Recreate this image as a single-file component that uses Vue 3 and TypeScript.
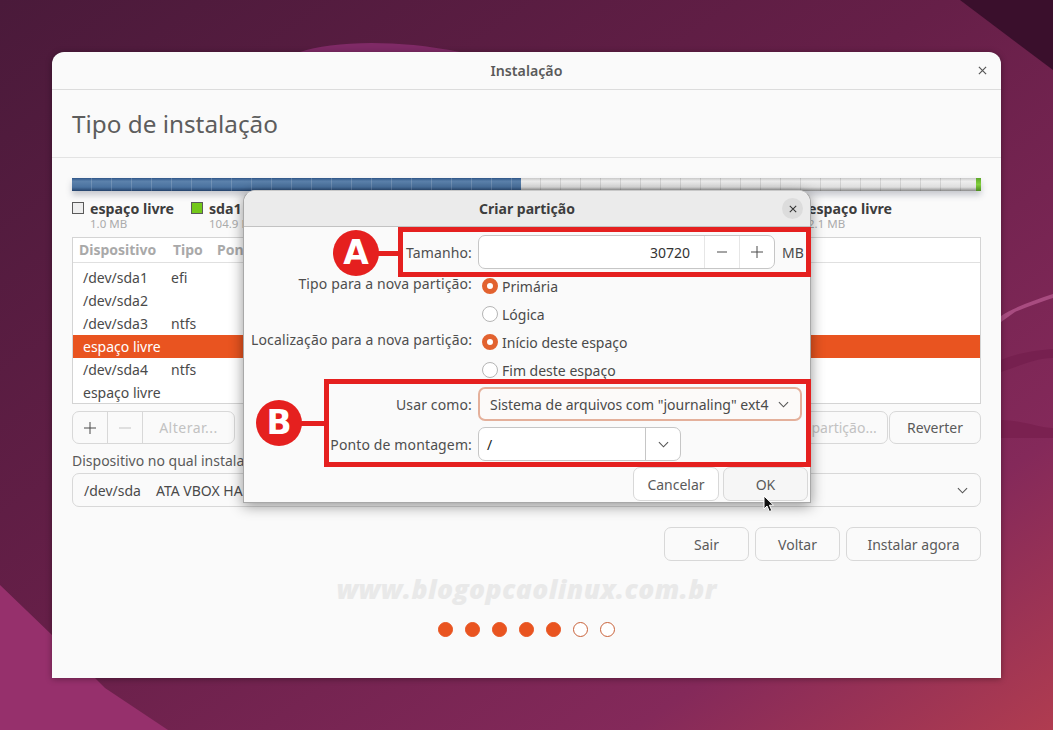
<script setup lang="ts">
interface PartRow {
  dev: string
  kind: string
  selected?: boolean
}

const rows: PartRow[] = [
  { dev: "/dev/sda1", kind: "efi" },
  { dev: "/dev/sda2", kind: "" },
  { dev: "/dev/sda3", kind: "ntfs" },
  { dev: "espaço livre", kind: "", selected: true },
  { dev: "/dev/sda4", kind: "ntfs" },
  { dev: "espaço livre", kind: "" },
]

const steps = [true, true, true, true, true, false, false]
</script>

<template>
  <div class="desktop">
    <svg class="wallpaper" viewBox="0 0 1053 730" preserveAspectRatio="none">
      <defs>
        <linearGradient id="base" x1="0" y1="0" x2="1" y2="1">
          <stop offset="0" stop-color="#4a1a3a" />
          <stop offset="0.45" stop-color="#661f48" />
          <stop offset="0.8" stop-color="#84295a" />
          <stop offset="1" stop-color="#b03c50" />
        </linearGradient>
      </defs>
      <rect width="1053" height="730" fill="url(#base)" />
      <path d="M0 585 L52 635 L105 688 L168 730 L0 730 Z" fill="#96306c" />
      <path d="M960 0 L1053 70 L1053 0 Z" fill="#3a0f2c" />
      <path d="M300 52 C330 42 390 38 460 52 Z" fill="#7f2a66" />
      <path d="M1001 316 C1012 308 1035 300 1053 294 L1053 298 C1040 302 1025 308 1015 312 L1001 322 Z" fill="#a84c80" />
      <path d="M1001 360 C1020 352 1040 350 1053 349 L1053 358 C1035 358 1020 366 1001 372 Z" fill="#76204f" />
      <path d="M1001 420 C1020 420 1040 428 1053 428 L1053 438 L1001 438 Z" fill="#7a2150" />
    </svg>

    <div class="window">
      <div class="titlebar">
        <span class="titlebar-text">Instalação</span>
        <svg class="close-x" viewBox="0 0 10 10"><path d="M1 1l8 8M9 1l-8 8" /></svg>
      </div>
      <div class="page-head">Tipo de instalação</div>

      <div class="content">
        <div class="bar">
          <div class="bar-used"></div>
          <div class="bar-free"></div>
          <div class="bar-end"></div>
        </div>

        <div class="legend">
          <div class="legend-item">
            <span class="swatch"></span>
            <div>
              <div class="legend-name">espaço livre</div>
              <div class="legend-size">1.0 MB</div>
            </div>
          </div>
          <div class="legend-item">
            <span class="swatch green"></span>
            <div>
              <div class="legend-name">sda1</div>
              <div class="legend-size">104.9 MB</div>
            </div>
          </div>
          <div class="legend-item last">
            <span class="swatch"></span>
            <div>
              <div class="legend-name">espaço livre</div>
              <div class="legend-size">2.1 MB</div>
            </div>
          </div>
        </div>

        <div class="table">
          <div class="table-head">
            <span class="th-dev">Dispositivo</span>
            <span class="th-type">Tipo</span>
            <span class="th-mount">Ponto de montagem</span>
          </div>
          <div class="table-body">
            <div v-for="(row, i) in rows" :key="i" class="row" :class="{ selected: row.selected }">
              <span class="td-dev">{{ row.dev }}</span>
              <span>{{ row.kind }}</span>
            </div>
          </div>
        </div>

        <div class="toolbar">
          <div class="group">
            <button class="seg icon-seg">
              <svg viewBox="0 0 12 12"><path d="M6 0v12M0 6h12" /></svg>
            </button>
            <button class="seg icon-seg off">
              <svg viewBox="0 0 12 12"><path d="M0 6h12" /></svg>
            </button>
            <button class="seg change">Alterar...</button>
          </div>
          <div class="toolbar-right">
            <button class="btn faded">Nova tabela de partição...</button>
            <button class="btn revert">Reverter</button>
          </div>
        </div>

        <div class="boot-label">Dispositivo no qual instalar o carregador de inicialização:</div>
        <div class="boot-select">
          <span class="boot-dev">/dev/sda</span>
          <span class="boot-name">ATA VBOX HARDDISK (64.4 GB)</span>
          <svg class="chev" viewBox="0 0 12 7"><path d="M1 1l5 5 5-5" /></svg>
        </div>

        <div class="actions">
          <button class="btn act-sair">Sair</button>
          <button class="btn act-voltar">Voltar</button>
          <button class="btn act-install">Instalar agora</button>
        </div>

        <div class="watermark">www.blogopcaolinux.com.br</div>

        <div class="dots">
          <span v-for="(on, i) in steps" :key="i" class="dot" :class="{ on }"></span>
        </div>
      </div>

      <div class="dialog">
        <div class="dialog-title">
          <span>Criar partição</span>
          <span class="dialog-close">
            <svg viewBox="0 0 10 10"><path d="M1 1l8 8M9 1l-8 8" /></svg>
          </span>
        </div>
        <div class="dialog-body">
          <div class="form">
            <label class="lbl">Tamanho:</label>
            <div class="size-line">
              <div class="spin">
                <span class="spin-value">30720</span>
                <span class="spin-btn"><svg viewBox="0 0 12 12"><path d="M1 6h10" /></svg></span>
                <span class="spin-btn"><svg viewBox="0 0 12 12"><path d="M6 0v12M0 6h12" /></svg></span>
              </div>
              <span class="unit">MB</span>
            </div>

            <label class="lbl top">Tipo para a nova partição:</label>
            <div class="radios">
              <div class="radio-line"><span class="radio on"></span>Primária</div>
              <div class="radio-line"><span class="radio"></span>Lógica</div>
            </div>

            <label class="lbl top">Localização para a nova partição:</label>
            <div class="radios">
              <div class="radio-line"><span class="radio on"></span>Início deste espaço</div>
              <div class="radio-line"><span class="radio"></span>Fim deste espaço</div>
            </div>

            <label class="lbl">Usar como:</label>
            <div class="select focused">
              <span>Sistema de arquivos com "journaling" ext4</span>
              <svg class="chev" viewBox="0 0 12 7"><path d="M1 1l5 5 5-5" /></svg>
            </div>

            <label class="lbl">Ponto de montagem:</label>
            <div class="mount">
              <span class="mount-value">/</span>
              <span class="mount-arrow">
                <svg class="chev" viewBox="0 0 12 7"><path d="M1 1l5 5 5-5" /></svg>
              </span>
            </div>
          </div>
          <div class="dialog-actions">
            <button class="btn d-cancel">Cancelar</button>
            <button class="btn d-ok">OK</button>
          </div>
        </div>
      </div>
    </div>

    <!-- anotacoes por cima da captura -->
    <div class="mark box-a"></div>
    <div class="mark box-b"></div>
    <div class="mark link-a"></div>
    <div class="mark link-b"></div>
    <div class="badge badge-a">A</div>
    <div class="badge badge-b">B</div>

    <svg class="cursor" viewBox="0 0 12 18">
      <path d="M1 1v13l3-3 2.400 5.500 2.400-1L6.400 10.200h4.100z" fill="#111" stroke="#fff" stroke-width="1" />
    </svg>
  </div>
</template>

<style scoped>
.desktop {
  position: relative;
  width: 1053px;
  height: 730px;
  padding: 52px;
  box-sizing: border-box;
  overflow: hidden;
  font-family: "Noto Sans", "DejaVu Sans", sans-serif;
  font-size: 14px;
  color: #3d3d3d;
}

.wallpaper {
  position: absolute;
  inset: 0;
  width: 100%;
  height: 100%;
}

.window {
  position: relative;
  height: 626px;
  background: #fafafa;
  border-radius: 12px 12px 0 0;
  box-shadow: 0 1px 6px rgba(0, 0, 0, 0.35);
  display: flex;
  flex-direction: column;
}

.titlebar {
  position: relative;
  height: 37px;
  flex: none;
  display: flex;
  align-items: center;
  justify-content: center;
  border-bottom: 1px solid #dcdcdc;
}

.titlebar-text {
  font-weight: 600;
  font-size: 14.200px;
  color: #5a5a5a;
}

.close-x {
  position: absolute;
  right: 14px;
  top: 14px;
  width: 9px;
  height: 9px;
  fill: none;
  stroke: #555;
  stroke-width: 1.300;
}

.page-head {
  height: 68px;
  flex: none;
  box-sizing: border-box;
  padding: 0 20px;
  display: flex;
  align-items: center;
  font-size: 24.300px;
  color: #5d5d5d;
  border-bottom: 1px solid #e3e3e3;
}

.content {
  flex: 1;
  display: flex;
  flex-direction: column;
  padding: 20px 20px 0;
}

.bar {
  display: flex;
  height: 13px;
  flex: none;
  box-shadow: 0 4px 6px rgba(60, 70, 90, 0.28);
}

.bar-used {
  width: 449px;
  background:
    repeating-linear-gradient(90deg, transparent 0 19px, rgba(255, 255, 255, 0.16) 19px 20px),
    linear-gradient(#2f5688, #5c82ac 25%, #4a729f 70%, #25436c);
}

.bar-free {
  flex: 1;
  background:
    repeating-linear-gradient(90deg, transparent 0 19px, rgba(0, 0, 0, 0.1) 19px 20px),
    linear-gradient(#c9c9c9, #eeeeee 25%, #dedede 70%, #8b8b8b);
}

.bar-end {
  width: 5px;
  background: linear-gradient(#5ea82a, #82d03c 50%, #4e8d22);
}

.legend {
  display: flex;
  margin-top: 9px;
  height: 37px;
  flex: none;
}

.legend-item {
  display: flex;
  gap: 6px;
  width: 119px;
}

.legend-item.last {
  margin-left: auto;
  width: 104px;
  margin-right: 87px;
}

.swatch {
  width: 10px;
  height: 10px;
  margin-top: 2px;
  border: 1px solid #5a5a5a;
  background: #eeeeee;
  flex: none;
}

.swatch.green {
  background: #73c81a;
}

.legend-name {
  font-weight: 700;
  font-size: 14.200px;
  line-height: 17px;
  color: #3d3d3d;
}

.legend-size {
  font-size: 11.500px;
  line-height: 14px;
  color: #ababab;
}

.table {
  height: 167px;
  flex: none;
  box-sizing: border-box;
  border: 1px solid #d4d4d4;
  background: #fff;
}

.table-head {
  height: 25px;
  display: flex;
  align-items: center;
  padding-left: 6px;
  padding-bottom: 2px;
  border-bottom: 1px solid #e0e0e0;
  font-weight: 700;
  font-size: 14px;
  color: #a9a9a9;
  box-sizing: border-box;
}

.th-dev {
  width: 94px;
}

.th-type {
  width: 44px;
}

.th-mount {
  width: 26px;
  overflow: hidden;
  white-space: nowrap;
}

.table-body {
  padding-top: 3px;
}

.row {
  height: 23px;
  display: flex;
  align-items: center;
  padding-left: 10px;
  color: #4a4a4a;
}

.row.selected {
  background: #e95420;
  color: #fff;
}

.td-dev {
  width: 88px;
}

.toolbar {
  display: flex;
  justify-content: space-between;
  margin-top: 7px;
  flex: none;
}

.group {
  display: flex;
  height: 33px;
  box-sizing: border-box;
  border: 1px solid #d8d8d8;
  border-radius: 7px;
  background: #fafafa;
}

.seg {
  border: 0;
  border-right: 1px solid #d8d8d8;
  background: none;
  padding: 0;
  font: inherit;
}

.seg:last-child {
  border-right: 0;
}

.icon-seg {
  width: 35px;
  display: flex;
  align-items: center;
  justify-content: center;
}

.icon-seg svg {
  width: 12px;
  height: 12px;
  fill: none;
  stroke: #4a4a4a;
  stroke-width: 1;
}

.icon-seg.off svg {
  stroke: #c4c4c4;
}

.change {
  width: 91px;
  color: #c2c2c2;
  letter-spacing: 0.5px;
}

.toolbar-right {
  display: flex;
  gap: 1px;
}

.btn {
  height: 34px;
  box-sizing: border-box;
  border: 1px solid #d8d8d8;
  border-radius: 7px;
  background: #fafafa;
  font: inherit;
  color: #5a5a5a;
  padding: 0;
}

.toolbar-right .btn {
  height: 33px;
}

.faded {
  width: 190px;
  color: #c2c2c2;
}

.revert {
  width: 92px;
}

.boot-label {
  margin-top: 6px;
  height: 23px;
  line-height: 21px;
  color: #5a5a5a;
  flex: none;
}

.boot-select {
  height: 34px;
  flex: none;
  box-sizing: border-box;
  border: 1px solid #d8d8d8;
  border-radius: 7px;
  display: flex;
  align-items: center;
  padding: 0 12px 0 11px;
  color: #4a4a4a;
  background: #fafafa;
}

.boot-dev {
  width: 72px;
}

.boot-name {
  flex: 1;
  white-space: nowrap;
}

.chev {
  width: 11px;
  height: 7px;
  fill: none;
  stroke: #555;
  stroke-width: 1.200;
  flex: none;
}

.actions {
  display: flex;
  justify-content: flex-end;
  gap: 6px;
  margin-top: 20px;
  flex: none;
}

.act-sair {
  width: 85px;
}

.act-voltar {
  width: 85px;
}

.act-install {
  width: 135px;
}

.watermark {
  margin-top: 10px;
  height: 36px;
  flex: none;
  text-align: center;
  font-family: "Open Sans", "Noto Sans", sans-serif;
  font-weight: 800;
  font-style: italic;
  font-size: 26.500px;
  line-height: 36px;
  letter-spacing: 0.4px;
  color: #e9e9e9;
}

.dots {
  display: flex;
  justify-content: center;
  gap: 12px;
  margin-top: 15px;
  flex: none;
}

.dot {
  width: 15px;
  height: 15px;
  box-sizing: border-box;
  border-radius: 50%;
  border: 1px solid #c9623a;
  background: #fff;
}

.dot.on {
  background: #e95420;
  border-color: #e95420;
}

.dialog {
  position: absolute;
  left: 191px;
  top: 138px;
  width: 568px;
  height: 313px;
  background: #fafafa;
  border-radius: 12px 12px 0 0;
  box-shadow: 0 3px 14px rgba(0, 0, 0, 0.42);
  border: 1px solid #a8a8a8;
  border-top-color: #c8c8c8;
  box-sizing: border-box;
  display: flex;
  flex-direction: column;
}

.dialog-title {
  position: relative;
  height: 36px;
  box-sizing: border-box;
  flex: none;
  background: #ebebeb;
  border-radius: 12px 12px 0 0;
  border-bottom: 1px solid #c2c2c2;
  display: flex;
  align-items: center;
  justify-content: center;
  font-weight: 700;
  font-size: 14px;
  color: #3d3d3d;
}

.dialog-close {
  position: absolute;
  right: 7px;
  top: 7px;
  width: 21px;
  height: 21px;
  border-radius: 50%;
  background: #dcdcdc;
  display: flex;
  align-items: center;
  justify-content: center;
}

.dialog-close svg {
  width: 8px;
  height: 8px;
  fill: none;
  stroke: #333;
  stroke-width: 1.300;
}

.dialog-body {
  flex: 1;
  padding: 8px 2px 0 7px;
  display: flex;
  flex-direction: column;
}

.form {
  display: grid;
  grid-template-columns: 221px 1fr;
  column-gap: 6px;
  row-gap: 6px;
  align-items: center;
  color: #4a4a4a;
}

.lbl {
  text-align: right;
  color: #4e4e4e;
  white-space: nowrap;
  letter-spacing: 0.13px;
}

.lbl.top {
  align-self: start;
  line-height: 17px;
}

.size-line {
  display: flex;
  align-items: center;
  gap: 7px;
}

.spin {
  width: 297px;
  height: 34px;
  box-sizing: border-box;
  border: 1px solid #c6c6c6;
  border-radius: 7px;
  background: #fff;
  display: flex;
  align-items: center;
}

.spin-value {
  flex: 1;
  text-align: right;
  padding-right: 14px;
  color: #333;
}

.spin-btn {
  width: 35px;
  height: 100%;
  box-sizing: border-box;
  border-left: 1px solid #e6e6e6;
  display: flex;
  align-items: center;
  justify-content: center;
}

.spin-btn svg {
  width: 12px;
  height: 12px;
  fill: none;
  stroke: #4a4a4a;
  stroke-width: 1;
}

.unit {
  color: #4a4a4a;
}

.radios {
  display: flex;
  flex-direction: column;
  margin-top: -3px;
  margin-bottom: -3px;
}

.radio-line {
  height: 28px;
  display: flex;
  align-items: center;
  gap: 4px;
  padding-left: 4px;
  color: #4a4a4a;
}

.radio {
  width: 16px;
  height: 16px;
  box-sizing: border-box;
  border: 1px solid #b5b5b5;
  border-radius: 50%;
  background: #fff;
  flex: none;
}

.radio.on {
  border: 5px solid #e2622f;
}

.select {
  width: 324px;
  height: 34px;
  box-sizing: border-box;
  border: 2px solid #e4b09b;
  border-radius: 7px;
  background: #fcfaf9;
  display: flex;
  align-items: center;
  justify-content: space-between;
  padding: 0 11px 0 10px;
  color: #4a4a4a;
  white-space: nowrap;
}

.mount {
  width: 203px;
  height: 34px;
  box-sizing: border-box;
  border: 1px solid #c6c6c6;
  border-radius: 7px;
  background: #fff;
  display: flex;
  align-items: center;
}

.mount-value {
  flex: 1;
  padding-left: 8px;
  color: #222;
}

.mount-arrow {
  width: 35px;
  height: 100%;
  box-sizing: border-box;
  border-left: 1px solid #c6c6c6;
  display: flex;
  align-items: center;
  justify-content: center;
}

.dialog-actions {
  display: flex;
  justify-content: flex-end;
  gap: 4px;
  margin-top: 6px;
}

.d-cancel {
  width: 86px;
  background: #fff;
}

.d-ok {
  width: 85px;
  background: #f6f6f6;
}

.mark {
  position: absolute;
  box-sizing: border-box;
}

.box-a {
  left: 398px;
  top: 227px;
  width: 413px;
  height: 50px;
  border: 5px solid #e5201f;
}

.box-b {
  left: 324px;
  top: 379px;
  width: 487px;
  height: 88px;
  border: 5px solid #e5201f;
}

.link-a {
  left: 375px;
  top: 251px;
  width: 24px;
  height: 5px;
  background: #e5201f;
}

.link-b {
  left: 298px;
  top: 421px;
  width: 27px;
  height: 5px;
  background: #e5201f;
}

.badge {
  position: absolute;
  width: 46px;
  height: 46px;
  border-radius: 50%;
  background: #e5201f;
  color: #fff;
  font-family: "DejaVu Sans", "Liberation Sans", sans-serif;
  font-weight: 700;
  font-size: 33px;
  line-height: 46px;
  text-align: center;
}

.badge-a {
  left: 333px;
  top: 230px;
}

.badge-b {
  left: 256px;
  top: 400px;
}

.cursor {
  position: absolute;
  left: 763px;
  top: 495px;
  width: 12px;
  height: 18px;
}
</style>

<style>
html,
body {
  margin: 0;
  overflow: hidden;
}
</style>
